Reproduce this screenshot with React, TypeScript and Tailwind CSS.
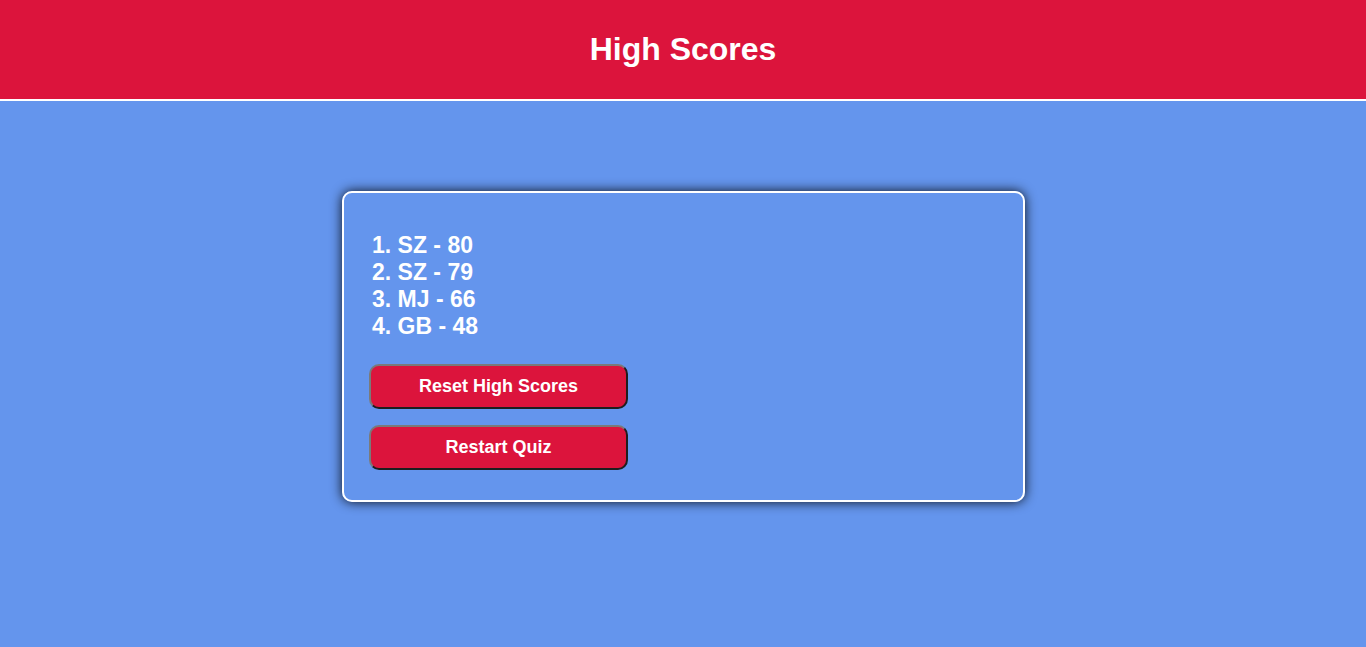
import React from "react";

export default function App() {
  const scores = ["1. SZ - 80", "2. SZ - 79", "3. MJ - 66", "4. GB - 48"];
  return (
    <div
      className="min-h-[647px] bg-[#6495ED] text-white"
      style={{ fontFamily: '"Liberation Sans", Arial, sans-serif' }}
    >
      <header className="h-[101px] bg-[#DC143C] border-b-2 border-white flex items-center justify-center">
        <h1 className="text-[32px] font-bold leading-none mt-[-2px]">High Scores</h1>
      </header>
      <div className="pt-[90px] flex justify-center pl-[1px]">
        <div className="w-[683px] h-[311px] border-2 border-white rounded-[10px] shadow-[0_0_12px_rgba(0,0,0,0.9)] px-[25px] pt-[39px]">
          <ul className="text-[23px] font-bold leading-[27px] pl-[3px]">
            {scores.map((s) => (
              <li key={s}>{s}</li>
            ))}
          </ul>
          <div className="mt-[24px] flex flex-col gap-[16px]">
            <button className="w-[259px] h-[45px] bg-[#DC143C] rounded-[10px] border-2 border-t-[#7a7a7a] border-l-[#7a7a7a] border-b-[#1e1e1e] border-r-[#1e1e1e] text-[18px] font-bold text-white">
              Reset High Scores
            </button>
            <button className="w-[259px] h-[45px] bg-[#DC143C] rounded-[10px] border-2 border-t-[#7a7a7a] border-l-[#7a7a7a] border-b-[#1e1e1e] border-r-[#1e1e1e] text-[18px] font-bold text-white">
              Restart Quiz
            </button>
          </div>
        </div>
      </div>
    </div>
  );
}
